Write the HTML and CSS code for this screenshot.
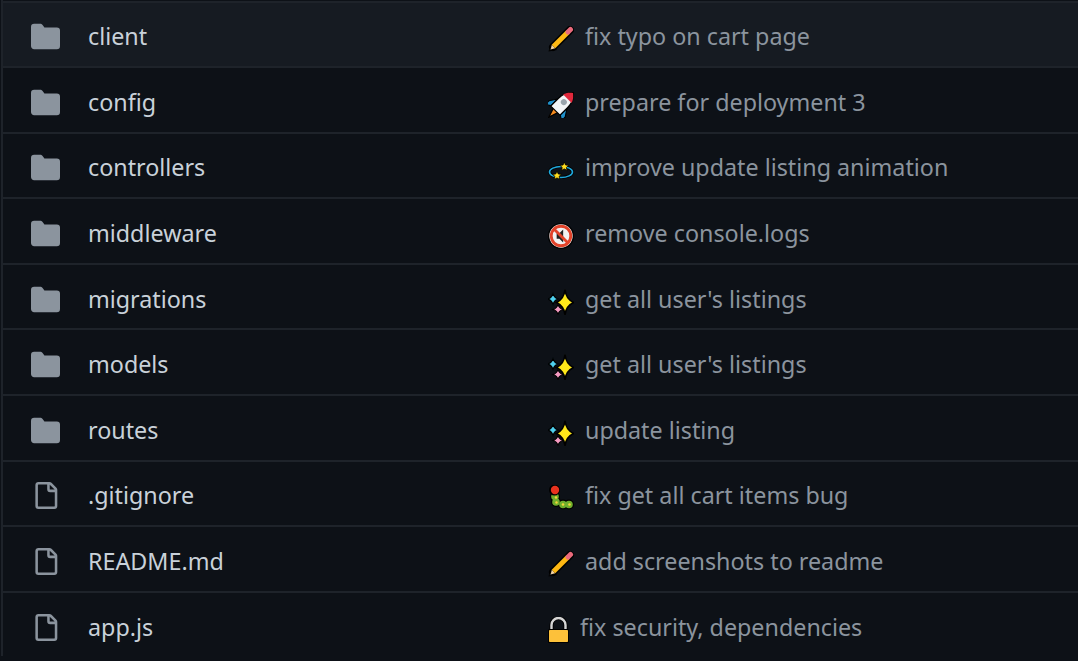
FILE: index.html
```html
<!DOCTYPE html>
<html lang="en">
  <head>
    <meta charset="UTF-8" />
    <title>Repository files</title>
    <link rel="stylesheet" href="styles.css">
  </head>
  <body>
    <svg class="defs" width="0" height="0">
      <symbol id="folder" viewBox="0 0 16 16">
        <path d="M1.75 1A1.75 1.75 0 0 0 0 2.75v10.5C0 14.216.784 15 1.75 15h12.5A1.75 1.75 0 0 0 16 13.25v-8.5A1.75 1.75 0 0 0 14.25 3H7.5a.25.25 0 0 1-.2-.1l-.9-1.2C6.07 1.26 5.55 1 5 1H1.75Z" fill="currentColor"/>
      </symbol>
      <symbol id="file" viewBox="0 0 16 16">
        <path d="M2 1.75C2 .784 2.784 0 3.75 0h6.586c.464 0 .909.184 1.237.513l2.914 2.914c.329.328.513.773.513 1.237v9.586A1.75 1.75 0 0 1 13.25 16h-9.5A1.750 1.750 0 0 1 2 14.250Zm1.750-.25a.25.25 0 0 0-.25.25v12.500c0 .138.112.25.25.25h9.500a.25.25 0 0 0 .25-.25V6h-2.750A1.750 1.750 0 0 1 9 4.250V1.500Zm6.750.062V4.250c0 .138.112.25.25.25h2.688l-.011-.013-2.914-2.914-.013-.011Z" fill="currentColor"/>
      </symbol>
      <symbol id="pencil" viewBox="0 0 26 26">
        <path d="M.5 25.500 2.500 17.500 9 24Z" fill="#000"/>
        <path d="M5 21 22 4" stroke="#000" stroke-width="8" stroke-linecap="round"/>
        <path d="M2.600 23.400 3.800 18.800 7.200 22.200Z" fill="#f3d3a2"/>
        <path d="M1.700 24.300 2.300 21.900 4.100 23.700Z" fill="#333"/>
        <path d="M5.500 20.500 20 6" stroke="#fdb813" stroke-width="5"/>
        <path d="M20 6 22.500 3.500" stroke="#ea6a7c" stroke-width="5" stroke-linecap="round"/>
      </symbol>
      <symbol id="sparkles" viewBox="0 0 26 26">
        <path d="M17 .5Q18 10 25.500 13.500 18 17 17 26 16 17 8.500 13.500 16 10 17 .5Z" fill="#ffe81a" stroke="#000" stroke-width="1.600"/>
        <path d="M5 3.500Q5.500 8.500 10 10 5.500 11.500 5 16.500 4.500 11.500 0 10 4.500 8.500 5 3.500Z" fill="#4fd0ee" stroke="#000" stroke-width="1.200"/>
        <path d="M10 14.500Q10.500 19 15 20.500 10.500 22 10 26 9.500 22 5 20.500 9.500 19 10 14.500Z" fill="#f59ac2" stroke="#000" stroke-width="1.200"/>
      </symbol>
    </svg>

    <div class="file-list">
      <div class="row dim">
        <svg class="icon folder"><use href="#folder"/></svg>
        <a class="name">client</a>
        <span class="message">
          <svg class="emoji"><use href="#pencil"/></svg>
          fix typo on cart page
        </span>
      </div>
      <div class="row">
        <svg class="icon folder"><use href="#folder"/></svg>
        <a class="name">config</a>
        <span class="message">
          <svg class="emoji" viewBox="0 0 26 26">
            <g transform="rotate(45 13 13)">
              <path d="M9.500 19.500H16.500L13 30.500Z" fill="#f58a1f" stroke="#000" stroke-width="1.200"/>
              <path d="M6.500 11 1.500 18.500V24L6.500 20.500ZM19.500 11 24.500 18.500V24L19.500 20.500Z" fill="#1f8fc9" stroke="#000" stroke-width="1.200"/>
              <path d="M13-4.500C17.500-1 19.500 4 19.500 10V21H6.500V10C6.500 4 8.500-1 13-4.500Z" fill="#f2f5f7" stroke="#000" stroke-width="1.200"/>
              <path d="M13-4C16.500-1.200 18.300 1.500 19 4H7C7.700 1.500 9.500-1.200 13-4Z" fill="#e0283c"/>
              <circle cx="13" cy="9" r="3" fill="#9aa5ad"/>
            </g>
          </svg>
          prepare for deployment 3
        </span>
      </div>
      <div class="row">
        <svg class="icon folder"><use href="#folder"/></svg>
        <a class="name">controllers</a>
        <span class="message">
          <svg class="emoji" viewBox="0 0 26 26">
            <ellipse cx="13" cy="15" rx="11.500" ry="5.500" fill="none" stroke="#000" stroke-width="3"/>
            <ellipse cx="13" cy="15" rx="11.500" ry="5.500" fill="none" stroke="#1fa8dc" stroke-width="1.600"/>
            <path d="M16.300 5 17.600 8 20.800 8.300 18.400 10.400 19.100 13.500 16.300 11.900 13.500 13.500 14.200 10.400 11.800 8.300 15 8Z" fill="#ffdd1f" stroke="#000" stroke-width=".8"/>
            <path d="M9 14 10.300 17 13.500 17.300 11.100 19.400 11.800 22.500 9 20.900 6.200 22.500 6.900 19.400 4.500 17.300 7.700 17Z" fill="#ffdd1f" stroke="#000" stroke-width=".8"/>
          </svg>
          improve update listing animation
        </span>
      </div>
      <div class="row">
        <svg class="icon folder"><use href="#folder"/></svg>
        <a class="name">middleware</a>
        <span class="message">
          <svg class="emoji" viewBox="0 0 24 24">
            <circle cx="12" cy="12" r="12" fill="#000"/>
            <circle cx="12" cy="12" r="10.800" fill="#f2f2f2"/>
            <circle cx="12" cy="12" r="9" fill="none" stroke="#e2432a" stroke-width="2.600"/>
            <path d="M8 9.500h2.500l3.500-3.500v12l-3.500-3.500H8Z" fill="#222"/>
            <path d="M5.500 5.500 18.500 18.500" stroke="#e2432a" stroke-width="2.600"/>
          </svg>
          remove console.logs
        </span>
      </div>
      <div class="row">
        <svg class="icon folder"><use href="#folder"/></svg>
        <a class="name">migrations</a>
        <span class="message">
          <svg class="emoji"><use href="#sparkles"/></svg>
          get all user's listings
        </span>
      </div>
      <div class="row">
        <svg class="icon folder"><use href="#folder"/></svg>
        <a class="name">models</a>
        <span class="message">
          <svg class="emoji"><use href="#sparkles"/></svg>
          get all user's listings
        </span>
      </div>
      <div class="row">
        <svg class="icon folder"><use href="#folder"/></svg>
        <a class="name">routes</a>
        <span class="message">
          <svg class="emoji"><use href="#sparkles"/></svg>
          update listing
        </span>
      </div>
      <div class="row">
        <svg class="icon file"><use href="#file"/></svg>
        <a class="name">.gitignore</a>
        <span class="message">
          <svg class="emoji" viewBox="0 0 26 26">
            <g fill="#000">
              <circle cx="7" cy="11.500" r="5"/>
              <circle cx="8" cy="17" r="5"/>
              <circle cx="15" cy="19.500" r="5"/>
              <circle cx="21" cy="19.500" r="5"/>
            </g>
            <g fill="#6fae2c">
              <circle cx="7" cy="11.500" r="3.800"/>
              <circle cx="8" cy="17" r="3.800"/>
              <circle cx="15" cy="19.500" r="3.800"/>
              <circle cx="21" cy="19.500" r="3.800"/>
            </g>
            <circle cx="6.500" cy="5" r="5.500" fill="#000"/>
            <circle cx="7" cy="5" r="4.200" fill="#e8321e"/>
            <circle cx="8" cy="12.500" r="1.200" fill="#f3d63a"/>
            <circle cx="8.500" cy="17.500" r="1.200" fill="#f3d63a"/>
            <circle cx="15" cy="19.500" r="1.300" fill="#f3d63a"/>
            <circle cx="21.500" cy="19.500" r="1.300" fill="#f3d63a"/>
          </svg>
          fix get all cart items bug
        </span>
      </div>
      <div class="row">
        <svg class="icon file"><use href="#file"/></svg>
        <a class="name">README.md</a>
        <span class="message">
          <svg class="emoji"><use href="#pencil"/></svg>
          add screenshots to readme
        </span>
      </div>
      <div class="row">
        <svg class="icon file"><use href="#file"/></svg>
        <a class="name">app.js</a>
        <span class="message">
          <svg class="emoji lock" viewBox="0 0 21 26">
            <path d="M3.500 14V8a7 7 0 0 1 14 0v6" fill="none" stroke="#000" stroke-width="4.200"/>
            <path d="M3.500 14V8a7 7 0 0 1 14 0v6" fill="none" stroke="#d5d5d5" stroke-width="2.400"/>
            <rect x="0" y="12" width="21" height="14" rx="1.500" fill="#000"/>
            <rect x="1" y="13" width="19" height="12" rx=".8" fill="#fdc13a"/>
          </svg>
          fix security, dependencies
        </span>
      </div>
    </div>
  </body>
</html>
```

FILE: styles.css
```css
html, body {
  margin: 0;
  height: 100%;
  background-color: #0d1117;
  overflow: hidden;
}
.defs {
  display: block;
  height: 0;
}
.file-list {
  margin-left: 1px;
  padding-top: 0.5px;
  border-left: 2px solid #1e232a;
  font-family: "Noto Sans", sans-serif;
  font-size: 23.3px;
}
.row {
  display: flex;
  align-items: center;
  height: 63.6px;
  border-top: 2px solid #1e232a;
}
.row.dim {
  background-color: #161b22;
}
.icon {
  flex: none;
  margin-top: 5px;
}
.folder {
  width: 29px;
  height: 29px;
  margin-left: 28px;
  margin-right: 28px;
  color: #8b949e;
}
.file {
  width: 27px;
  height: 27px;
  margin-left: 29px;
  margin-right: 29px;
  color: #8b949e;
}
.name {
  width: 460px;
  padding-top: 4px;
  color: #c9d1d9;
  flex: none;
}
.message {
  display: flex;
  align-items: center;
  gap: 11px;
  padding-top: 4px;
  color: #8b949e;
}
.emoji {
  width: 26px;
  height: 26px;
  margin-top: 6px;
  flex: none;
}
.lock {
  width: 21px;
}
```
